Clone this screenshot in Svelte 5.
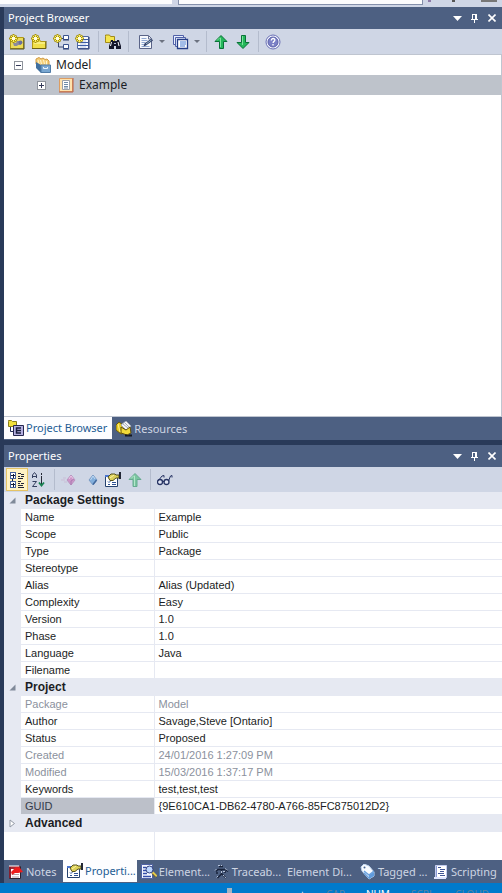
<script>
  const projectTools = ['model', 'folder', 'diagram', 'element', '|', 'find', '|', 'note+', 'copy+', '|', 'up', 'down', '|', 'help'];
  const propertyTools = ['category', 'sort', '|', 'pink', 'blue', 'props', 'softup', '|', 'glasses'];
  const labels = {
    model: 'New model', folder: 'New package', diagram: 'New diagram', element: 'New element',
    find: 'Find', note: 'Documentation', copy: 'Copy', up: 'Move up', down: 'Move down', help: 'Help',
    category: 'Categorized', sort: 'Alphabetical', pink: 'Stereotype', blue: 'Element', props: 'Properties',
    softup: 'Parent', glasses: 'View'
  };
  const groups = [
    { name: 'Package Settings', open: true, rows: [
      ['Name', 'Example'], ['Scope', 'Public'], ['Type', 'Package'], ['Stereotype', ''],
      ['Alias', 'Alias (Updated)'], ['Complexity', 'Easy'], ['Version', '1.0'], ['Phase', '1.0'],
      ['Language', 'Java'], ['Filename', '']
    ] },
    { name: 'Project', open: true, rows: [
      ['Package', 'Model', 'muted'], ['Author', 'Savage,Steve [Ontario]'], ['Status', 'Proposed'],
      ['Created', '24/01/2016 1:27:09 PM', 'muted'], ['Modified', '15/03/2016 1:37:17 PM', 'muted'],
      ['Keywords', 'test,test,test'], ['GUID', '{9E610CA1-DB62-4780-A766-85FC875012D2}', 'selected']
    ] },
    { name: 'Advanced', open: false, rows: [] }
  ];
  const bottomTabs = [
    ['notes', 'Notes'], ['props', 'Properti...'], ['inspect', 'Element...'], ['trace', 'Traceab...'],
    ['', 'Element Di...'], ['tag', 'Tagged ...'], ['script', 'Scripting']
  ];
</script>

{#snippet spark()}
  <path d="M4.500 0v9M0 4.500h9M1.500 1.500l6 6M7.500 1.500l-6 6" stroke="#a8920c" stroke-width="2" />
  <path d="M4.500 1v7M1 4.500h7M2 2l5 5M7 2l-5 5" stroke="#fff35a" />
  <rect x="3" y="3" width="3" height="3" fill="#fffde0" />
{/snippet}

{#snippet icon(name)}
  <svg class="icon" viewBox="0 0 16 16" width="16" height="16" fill="none" aria-hidden="true">
    {#if name === 'model'}
      <path d="M1.500 3.500h13v11h-13z" fill="#ecdc58" stroke="#b39a16" /><path d="M1 15h14V4" stroke="#4c4a20" />
      <path d="M4 9h3l1-2h4v4H9l-1 1H5z" fill="#8c8b9c" /><circle cx="11.500" cy="8.500" r="2" fill="#6b6f9a" />
      {@render spark()}
    {:else if name === 'folder'}
      <path d="M1.500 5.500h7l1 2h5v7h-13z" fill="#f0e04a" stroke="#b39a16" /><path d="M1 14.500h14V7" stroke="#6d6212" />
      <path d="M3 9h11" stroke="#fffbb0" />{@render spark()}
    {:else if name === 'diagram'}
      <path d="M7 4.500h4M5.500 8v5h5" stroke="#39446b" /><path d="M10.500 1.500h5v4h-5zM10.500 10.500h5v4h-5z" fill="#fff" stroke="#39538f" />
      <path d="M10 6h6M10 15h6" stroke="#26386c" />{@render spark()}
    {:else if name === 'element'}
      <path d="M2.500 2.500h11v12h-11z" fill="#f8faff" stroke="#5068a0" /><path d="M3 5.500h10M3 8.500h10M3 11.500h10" stroke="#3c5da8" />
      <path d="M5 7h6M5 10h6M5 13h6" stroke="#b9c6e4" /><path d="M14 3v12H3" stroke="#2c3d74" />{@render spark()}
    {:else if name === 'find'}
      <path d="M.500 2.500V1h4l1 1.500h4v6h-9z" fill="#f5e54e" stroke="#a28b18" />
      <path d="M6 6h2v1h4V6h2l2 6v3h-5v-3H9v3H4v-3z" fill="#16182c" /><path d="M6.500 8l-1 4M13 8l1 4" stroke="#fff" /><path d="M9 9.500h2" stroke="#b7bfd8" />
    {:else if name === 'note'}
      <path d="M1.500 1.500h9l3 3v10h-12z" fill="#f6f8fc" stroke="#5a6488" /><path d="M10.500 2v3h3" stroke="#667193" />
      <path d="M3.500 4.500h5M3.500 6.500h6M3.500 8.500h4M3.500 10.500h3M3.500 12.500h8" stroke="#90a8d2" /><path d="M5.500 12.500l1-3 7-5 1.500 2-7 5z" fill="#334067" /><path d="M8 10l5.500-4" stroke="#8fb0c8" />
    {:else if name === 'copy'}
      <path d="M.500 1.500h10v9h-10z" fill="#e8efff" stroke="#5061a8" /><path d="M2.500 3.500h10v9h-10z" fill="#e8efff" stroke="#5061a8" />
      <path d="M4.500 5.500h10v9h-10z" fill="#fff" stroke="#263f88" stroke-width="1.300" /><path d="M7 8h6M7 10h6M7 12h5" stroke="#477ad0" />
    {:else if name === 'up'}
      <path d="M8 1.500l6 6h-3.500v7h-4v-7H2z" fill="#25b75b" stroke="#087337" /><path d="M7.500 4v9M4 6.500l3-3" stroke="#7be29c" />
    {:else if name === 'down'}
      <path d="M8 14.500l6-6h-3.500v-7h-4v7H2z" fill="#25b75b" stroke="#087337" /><path d="M7.500 2v9" stroke="#7be29c" />
    {:else if name === 'help'}
      <circle cx="8" cy="8" r="7" fill="#f3f5ff" stroke="#6a70b4" /><circle cx="8" cy="8" r="5" fill="#7b80c6" stroke="#5b60a8" />
      <path d="M6.300 6.500c0-3 4-2.300 3.500-.200-.300 1.200-1.700 1.100-1.700 2.700M8 10v1.500" stroke="#fff" stroke-width="1.300" />
    {:else if name === 'category'}
      <g shape-rendering="crispEdges"><path d="M1.500.500h5v6h-5zM1.500 9.500h5v6h-5z" fill="#fff" stroke="#44629c" /><path d="M2 3.500h4M4 2v4M2 12.500h4M4 11v4M3.500 7v2" stroke="#101c38" />
      <path d="M9 1.500h3M9 4.500h2M12 4.500h3M9 6.500h5M9 9.500h3M9 11.500h2M12 11.500h3M9 13.500h5M9 15.500h6M12 2.500h3" stroke="#20263a" /></g>
    {:else if name === 'sort'}
      <path d="M1.500 6V3L3.500.500 5.500 3v3M2 4.500h3M1.500 9.500h4l-4 5h4.500" stroke="#35405f" /><path d="M10.500 1v2M10.500 4v9" stroke="#252a37" /><path d="M8 10.500l2.500 3 2.500-3" stroke="#178150" stroke-width="1.800" />
    {:else if name === 'pink'}
      <path d="M10 3l4 5-4 5-4-5z" fill="#cd96c8" stroke="#b995c0" /><path d="M8 7l2-3 3 4" stroke="#ecc7e6" /><path d="M10 13V9l3-2" stroke="#a87bb0" /><path d="M2 6h3M0 8h4M3 10h3" stroke="#c9bdd6" />
    {:else if name === 'blue'}
      <path d="M10 3l4 5-4 5-4-5z" fill="#82aedb" stroke="#7b9cc6" /><path d="M7.500 8L10 4l2 3" stroke="#bfdaf4" /><path d="M10 12.500l3.500-4.500" stroke="#43699d" stroke-width="1.500" />
    {:else if name === 'props'}
      <path d="M.500 3.500h12v11h-12z" fill="#fff" stroke="#26426e" /><path d="M0 4h9" stroke="#4a75cf" stroke-width="2" />
      <path d="M3 9.500l1 1 2-2M3 12.500h2M7 10.500h4M7 12.500h4" stroke="#2d5193" /><path d="M3 5l3-3h4l1 1h3v3h-3L8 8.500H5z" fill="#dcd05a" stroke="#57521d" /><path d="M14 0h2v7h-2z" fill="#222735" /><path d="M5 6l4-3" stroke="#fff7a5" />
    {:else if name === 'softup'}
      <path d="M8 1.500l6 6h-4v7H6v-7H2z" fill="#7bc6a0" stroke="#66aa90" /><path d="M7.500 4v10M4 6.500l3-3" stroke="#b4e7cc" />
    {:else if name === 'glasses'}
      <circle cx="3" cy="10" r="2.500" fill="#dfe4f4" stroke="#263363" stroke-width="1.300" /><circle cx="9.500" cy="10" r="2.500" fill="#dfe4f4" stroke="#263363" stroke-width="1.300" />
      <path d="M5.500 9.500h2M1 9l4-5 2-.500v2M11.500 9l2-5 1.500-.500v2" stroke="#263363" />
    {:else if name === 'root'}
      <path d="M1 2l3-1.500L6 2l2-1 2 1.500 2-.500 2 2v6H6L1 7z" fill="#f5cf78" stroke="#d19a45" /><path d="M3 3l1 4M5.500 3l1 4M8.500 3l1 4M11.500 4v4" stroke="#fff4cc" />
      <path d="M1 5l5 3v8l-5-5z" fill="#41709f" /><path d="M6 8h9.500v7.500H6z" fill="#78a6d0" stroke="#4f7ba6" /><path d="M8.500 10v1.500h4V10" stroke="#eaf4ff" />
    {:else if name === 'package'}
      <path d="M1.500 1.500h13v13h-13z" fill="#ffe2ad" stroke="#dc9d63" /><path d="M1 15h14V1" stroke="#b85f48" /><path d="M4.500 3.500h7v9h-7z" fill="#fff" stroke="#9aa0a9" /><path d="M6 5.500h4M6 7.500h4M6 9.500h4M6 11h4" stroke="#6e8ba8" />
    {:else if name === 'browser'}
      <path d="M.500 1.500V.500h3l1 1h4v5h-8z" fill="#f1df3c" stroke="#8b7e1b" /><path d="M2.500 7v4.500h3" stroke="#222c59" /><path d="M5.500 5.500h10v10h-10z" fill="#b4afe0" stroke="#25264f" /><path d="M13 8H8.500v5H13M8.500 10.500H13" stroke="#171c3d" stroke-width="1.500" />
    {:else if name === 'resources'}
      <path d="M0 4l3-3 4 3 1 8-3 1-5-4z" fill="#e9ce26" stroke="#6d5b0c" /><path d="M5 4l5-4 5 5-4 5z" fill="#f4f5f9" stroke="#a2a8b5" /><path d="M5 6l5 3 4-3 1 6-4 2-6-2z" fill="#f0d939" stroke="#60500c" /><path d="M2 3l2 8" stroke="#fff08a" /><path d="M7 3l5 4M9 2l4 4" stroke="#a9adb8" /><path d="M9 15.500v-2h2l1 1 1-1h3v2z" fill="#131722" />
    {:else if name === 'notes'}
      <path d="M1.500 2.500h11v12h-11z" fill="#fff" stroke="#2d2230" /><path d="M1 2h11v3H1z" fill="#a82a35" /><path d="M2 1v2M4 1v2M6 1v2M8 1v2M10 1v2" stroke="#fff" /><path d="M4 8h7M4 10.500h7M4 13h7" stroke="#b9a0a8" /><path d="M3 8l5-5 4 1 3 4-5 1H7L4 11z" fill="#ee1c1c" /><path d="M2 3v11" stroke="#842030" stroke-width="2" />
    {:else if name === 'inspect'}
      <path d="M.500.500h11v14H.500z" fill="#f5f7ff" stroke="#4f61a4" /><path d="M2 3.500h3M2 6.500h3M2 9.500h4M2 12.500h8" stroke="#344eaa" stroke-width="1.500" /><circle cx="8.500" cy="5.500" r="3.500" fill="#bdd6ff" stroke="#34437f" /><path d="M11.500 8.500l4 4" stroke="#e7cb49" stroke-width="2.500" /><path d="M11 9.500l4 4" stroke="#403b30" />
    {:else if name === 'trace'}
      <path d="M5 2.500h4M2 7.500l2-2h7l3 2M7.500 5v5l-4 4M8 10l4 4M2 9h2M10 8h2" stroke="#19233b" stroke-width="1.500" /><path d="M4 1.500h4M1 6.500l2-2M11 4.500l3 2M7.500 7v3M4 12l-2 2M9 11l3 3M9 7.500h2" stroke="#b6c3da" stroke-dasharray="2 1" />
    {:else if name === 'tag'}
      <path d="M1 3l3-3 5 2 5 6v4l-5 3-7-8z" fill="#f8fbff" stroke="#bed4ef" /><path d="M4 9l5 5 5-4M4 7l5 4 5-4" stroke="#6ba2df" stroke-width="1.500" /><path d="M9 11v4l5-3V8z" fill="#5f9bdd" /><circle cx="4.500" cy="3.500" r="1" fill="#41618f" />
    {:else if name === 'script'}
      <path d="M2.500 1.500h11v12h-11z" fill="#fff" stroke="#c4cdf0" /><path d="M1 14h12" stroke="#dfe5ff" stroke-width="2" /><path d="M3.500 2v11" stroke="#8b9bd4" /><path d="M5 3.500h3M7 5.500h5M7 7.500h4M5 9.500h6M7 11.500h5" stroke="#425796" />
    {/if}
  </svg>
{/snippet}

{#snippet toolbar(items, label)}
  <div class="toolbar" role="toolbar" aria-label={label}>
    {#each items as item}
      {#if item === '|'}
        <span class="separator"></span>
      {:else}
        <button class:split={item.endsWith('+')} class:on={item === 'category'} aria-label={labels[item.replace('+', '')]}>
          {@render icon(item.replace('+', ''))}
          {#if item.endsWith('+')}<span class="drop"></span>{/if}
        </button>
      {/if}
    {/each}
  </div>
{/snippet}

{#snippet titlebar(title)}
  <header class="titlebar">
    <h2>{title}</h2>
    <button aria-label="Window menu"><svg width="9" height="5" viewBox="0 0 9 5"><path d="M0 0h9L4.500 5z" fill="#fff" /></svg></button>
    <button aria-label="Pin"><svg width="7" height="9" viewBox="0 0 7 9" fill="none" stroke="#fff" shape-rendering="crispEdges"><path d="M1.500 5V.500h4V5M4.500 1v4M0 5.500h7M3.500 6v3" /></svg></button>
    <button aria-label="Close"><svg width="8" height="8" viewBox="0 0 8 8" stroke="#fff" stroke-width="1.600"><path d="M.500.500l7 7M7.500.500l-7 7" /></svg></button>
  </header>
{/snippet}

<div class="app">
  <div class="topstrip"><span class="pane"></span><span class="pane wide"></span><span class="bit purple"></span><span class="bit"></span><span class="bit thumb"></span></div>
  <main>
    <section class="browser">
      {@render titlebar('Project Browser')}
      {@render toolbar(projectTools, 'Project tools')}
      <div class="tree">
        <div class="node">
          <button class="expander" aria-label="Collapse Model"><svg width="9" height="9" viewBox="0 0 9 9" shape-rendering="crispEdges"><path d="M.500.500h8v8h-8z" fill="#fff" stroke="#8f949c" /><path d="M2 4.500h5" stroke="#343a59" /></svg></button>
          {@render icon('root')}<span>Model</span>
        </div>
        <div class="node child">
          <button class="expander" aria-label="Expand Example"><svg width="9" height="9" viewBox="0 0 9 9" shape-rendering="crispEdges"><path d="M.500.500h8v8h-8z" fill="#fff" stroke="#8f949c" /><path d="M2 4.500h5M4.500 2v5" stroke="#343a59" /></svg></button>
          {@render icon('package')}<span>Example</span>
        </div>
      </div>
      <nav class="tabs upper">
        <button class="active">{@render icon('browser')}<span>Project Browser</span></button>
        <button>{@render icon('resources')}<span>Resources</span></button>
      </nav>
    </section>
    <section class="properties">
      {@render titlebar('Properties')}
      {@render toolbar(propertyTools, 'Property tools')}
      <table>
        <colgroup><col class="gutter" /><col class="key" /><col /></colgroup>
        {#each groups as group}
          <tbody>
            <tr class="group">
              <td><button aria-label="Toggle {group.name}">
                <svg width="7" height="9" viewBox="0 0 7 9">
                  {#if group.open}<path d="M6.500 1.500v6h-6z" fill="#808a99" />{:else}<path d="M1 1l4.500 3.500L1 8z" fill="#fff" stroke="#9299a5" />{/if}
                </svg>
              </button></td>
              <th colspan="2" scope="rowgroup">{group.name}</th>
            </tr>
            {#each group.rows as [key, value, state]}
              <tr class={state}><td></td><th scope="row">{key}</th><td>{value}</td></tr>
            {/each}
          </tbody>
        {/each}
      </table>
      <div class="blank"></div>
      <nav class="tabs lower">
        {#each bottomTabs as [glyph, label]}
          <button class:active={glyph === 'props'}>{#if glyph}{@render icon(glyph)}{/if}<span>{label}</span></button>
        {/each}
      </nav>
    </section>
  </main>
  <footer>
    <span class="slider"></span><span class="lit">+</span>
    <span>CAP</span><span class="lit">NUM</span><span>SCRL</span><span>CLOUD</span>
  </footer>
</div>

<style>
  .app {
    display: flex; flex-direction: column; height: 100vh; overflow: hidden;
    background: #293a59; color: #1b1d24; font: 11px/16px "Noto Sans", "Open Sans", sans-serif;
  }
  button { border: 0; margin: 0; padding: 0; background: none; color: inherit; font: inherit; }
  svg { display: block; flex: none; }
  .topstrip { display: flex; flex: none; height: 7px; background: #cfd6e6; }
  .pane { flex: 172; height: 4px; background: #fcfcfd; margin-right: 6px; }
  .wide { flex: 243; border: solid #8490ab; border-width: 0 1px 1px; margin-right: 5px; }
  .bit { width: 3px; height: 2px; margin-right: 21px; background: #555; }
  .bit.purple { background: #8d7ba8; }
  .thumb { width: 16px; margin: 0 5px; background: #777; }
  main { display: flex; flex-direction: column; flex: 1; min-height: 0; margin-left: 4px; gap: 5px; }
  section { display: flex; flex-direction: column; background: #4d6082; }
  .browser { flex: 1; min-height: 0; }
  .titlebar { display: flex; align-items: center; height: 22px; padding: 0 2px 0 4px; color: #fff; }
  h2 { flex: 1; margin: 0; font: inherit; }
  .titlebar button { display: grid; place-items: center; width: 17px; height: 18px; }
  .toolbar { display: flex; align-items: center; height: 25px; padding-left: 2px; background: #cfd6e5; }
  .toolbar button { display: flex; align-items: center; justify-content: center; width: 22px; height: 23px; box-sizing: border-box; }
  .toolbar button.on { border: 1px solid #e5c365; background: #fff3c4; }
  .toolbar .split { width: 32px; margin-left: 3px; gap: 5px; }
  .drop { border: solid transparent; border-width: 3px 3px 0; border-top-color: #6c7280; }
  .separator { width: 1px; height: 21px; margin: 0 3px 0 4px; background: #b4bccd; }
  .tree { flex: 1; min-height: 0; background: #fff; border: 1px solid #bfc5d0; border-left: 0; font-size: 12px; }
  .node { display: flex; align-items: center; height: 20px; padding-left: 10px; }
  .node .icon { margin: 0 5px 0 12px; }
  .child { padding-left: 33px; background: #bec3cb; }
  .tabs { display: flex; height: 23px; color: #ced5e3; white-space: nowrap; }
  .tabs button { display: flex; align-items: center; gap: 2px; padding: 0 4px; }
  .tabs .active { height: 22px; background: #fdfdff; color: #245c94; }
  .upper button { padding-right: 5px; }
  .lower button { flex: 1; min-width: 0; }
  .lower button:first-child { flex: 0 0 59px; box-sizing: border-box; }
  .lower .active { flex: none; padding-right: 1px; }
  table { width: 100%; table-layout: fixed; border-collapse: collapse; background: #e6e9f2; font: 11px/16px "Liberation Sans", Arial, sans-serif; }
  .gutter { width: 17px; }
  .key { width: 133px; }
  td, th { height: 16px; padding: 0 0 0 4px; border-bottom: 1px solid #e6e9f2; text-align: left; font-weight: 400; white-space: nowrap; }
  td:first-child { padding: 0; }
  tr:not(.group) > td:last-child { border-left: 1px solid #e6e9f2; }
  tr:not(.group) > :not(:first-child) { background: #fff; }
  .group th { font-size: 12px; font-weight: 700; }
  .group button { display: grid; place-items: center; width: 17px; height: 16px; }
  .muted { color: #8b919d; }
  tr.selected > th:not(:first-child) { background: #bcc0c9; color: #343b4a; }
  .blank { height: 28px; background: linear-gradient(90deg, #fff 150px, #e6e9f2 150px, #e6e9f2 151px, #fff 151px); }
  footer {
    display: flex; justify-content: flex-end; align-items: flex-start; flex: none; gap: 21px; height: 10px;
    padding-right: 13px; overflow: hidden; background: #007acc; color: #5b83a0; font-size: 10px; line-height: 22px;
  }
  .slider { width: 5px; height: 5px; margin: 5px 46px 0 0; background: #a4b4c3; }
  .lit { color: #fff; }
</style>
